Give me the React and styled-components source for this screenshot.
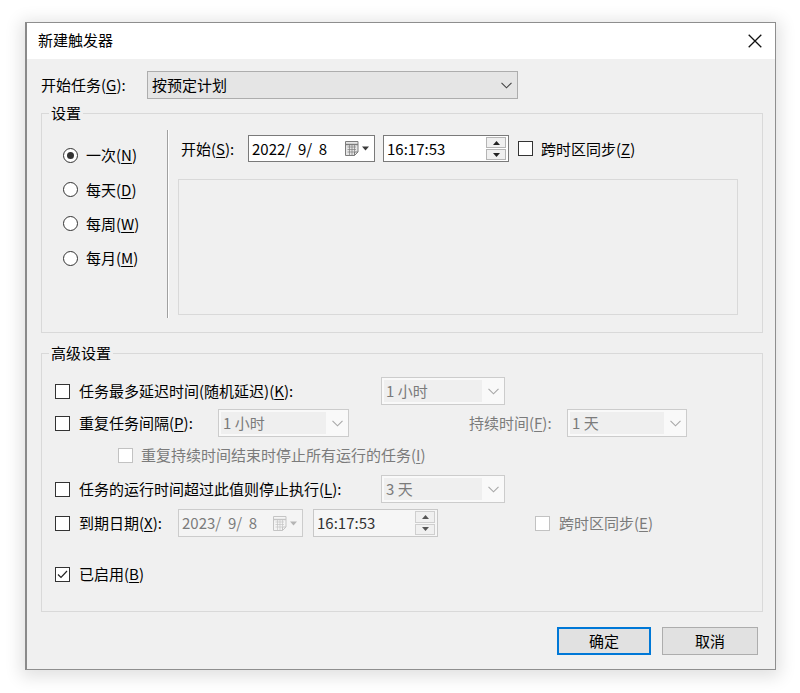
import React from "react";
import styled, { createGlobalStyle, css } from "styled-components";

const FONT = `"Noto Sans CJK SC", "Microsoft YaHei", "Noto Sans", sans-serif`;
const DISABLED = "#7b7b7b";

const GlobalStyle = createGlobalStyle`
  html, body { margin: 0; padding: 0; background: #ffffff; }
  body { font-family: ${FONT}; font-size: 15px; color: #000; }
  *, *::before, *::after { box-sizing: border-box; }
  u { text-underline-offset: 2px; text-decoration-thickness: 1px; }
`;

const Page = styled.div`
  padding: 22px 0 0 25px;
  width: 800px;
  height: 693px;
`;

const Window = styled.div`
  width: 751px;
  height: 648px;
  display: flex;
  flex-direction: column;
  background: #f0f0f0;
  border: 1px solid #8e8e8e;
  border-left: 2px solid #8a8a8a;
  box-shadow: 0 3px 16px 4px rgba(0, 0, 0, 0.12);
`;

const TitleBar = styled.div`
  height: 36px;
  flex: 0 0 36px;
  background: #ffffff;
  display: flex;
  align-items: center;
  justify-content: space-between;
  padding: 0 13px 2px 11px;
`;

const Title = styled.div`
  font-size: 15px;
  line-height: 20px;
  color: #000;
`;

const CloseButton = styled.div`
  width: 14px;
  height: 14px;
  display: flex;
  margin-top: 1px;
`;

const Body = styled.div`
  flex: 1;
  display: flex;
  flex-direction: column;
  padding: 0 12px 0 14px;
`;

const Row = styled.div`
  display: flex;
  align-items: center;
  height: ${(p) => p.$h || 28}px;
  margin-top: ${(p) => p.$mt || 0}px;
`;

const Label = styled.span`
  flex: 0 0 auto;
  width: ${(p) => (p.$w ? `${p.$w}px` : "auto")};
  margin-left: ${(p) => p.$ml || 0}px;
  font-size: 15px;
  line-height: 20px;
  white-space: nowrap;
  color: ${(p) => (p.$disabled ? DISABLED : "#000")};
`;

const Combo = styled.div`
  flex: 0 0 auto;
  width: ${(p) => p.$w}px;
  height: 28px;
  margin-left: ${(p) => p.$ml || 0}px;
  display: flex;
  align-items: center;
  border: 1px solid;
  ${(p) =>
    p.$disabled
      ? css`
          background: #f9f9f9;
          border-color: #cccccc;
          color: ${DISABLED};
        `
      : css`
          background: #e5e5e5;
          border-color: #adadad;
          color: #000;
        `}
`;

const ComboValue = styled.span`
  flex: 1;
  align-self: stretch;
  margin: 2px 0 2px 2px;
  padding-left: 2px;
  font-size: 15px;
  line-height: 22px;
  white-space: pre;
  background: ${(p) => (p.$disabled ? "#efefef" : "transparent")};
`;

const ComboArrow = styled.span`
  flex: 0 0 auto;
  width: 22px;
  display: flex;
  justify-content: center;
`;

const Chevron = ({ disabled }) => (
  <svg width="11" height="7" viewBox="0 0 11 7">
    <path
      d="M0.5 0.8 L5.5 5.8 L10.5 0.8"
      fill="none"
      stroke={disabled ? "#a8a8a8" : "#444"}
      strokeWidth="1.1"
    />
  </svg>
);

const Select = ({ w, ml, disabled, value }) => (
  <Combo $w={w} $ml={ml} $disabled={disabled}>
    <ComboValue $disabled={disabled}>{value}</ComboValue>
    <ComboArrow>
      <Chevron disabled={disabled} />
    </ComboArrow>
  </Combo>
);

// tone: "normal" | "muted" (dimmed frame, dark text) | "disabled"
const Field = styled.div`
  flex: 0 0 auto;
  width: ${(p) => p.$w}px;
  height: ${(p) => p.$h || 28}px;
  margin-left: ${(p) => p.$ml || 0}px;
  display: flex;
  align-items: center;
  padding: 0 2px 0 3px;
  border: 1px solid;
  ${(p) =>
    p.$tone === "disabled"
      ? css`
          background: #f4f4f4;
          border-color: #cccccc;
          color: ${DISABLED};
        `
      : p.$tone === "muted"
      ? css`
          background: #f6f6f6;
          border-color: #c8c8c8;
          color: #333;
        `
      : css`
          background: #ffffff;
          border-color: #7a7a7a;
          color: #000;
        `}
`;

const FieldText = styled.span`
  flex: 1;
  font-size: 15px;
  line-height: 20px;
  white-space: pre;
`;

const CalendarGlyph = ({ disabled }) => {
  const c = disabled ? "#c4c4c4" : "#7c7c7c";
  const tri = disabled ? "#b4b4b4" : "#3a3a3a";
  return (
    <svg width="28" height="17" viewBox="0 0 28 17">
      <path d="M1.5 1.5 H14 V12 L10.5 15.5 H1.5 Z" fill={disabled ? "#f4f4f4" : "#e6e6e6"} stroke={c} />
      <path d="M1.5 4.5 H14" stroke={c} strokeWidth="1.4" />
      <path d="M3.5 7 H12 M3.5 9.5 H12 M3.5 12 H10 M5.5 5 V15 M8 5 V15 M10.5 5 V13" stroke={c} strokeWidth="0.7" />
      <path d="M10.5 15.5 V12 H14" fill="none" stroke={c} />
      <path d="M18 6.5 H25 L21.5 10.5 Z" fill={tri} />
    </svg>
  );
};

const Spin = styled.div`
  flex: 0 0 auto;
  width: 20px;
  align-self: stretch;
  margin: 1px 0;
  display: flex;
  flex-direction: column;
`;

const SpinButton = styled.div`
  flex: 1;
  display: flex;
  align-items: center;
  justify-content: center;
  background: #f0f0f0;
  border: 1px solid ${(p) => (p.$muted ? "#cfcfcf" : "#b5b5b5")};
  & + & { margin-top: 1px; }
`;

const SpinArrow = ({ up, muted }) => (
  <svg width="7" height="4" viewBox="0 0 7 4">
    <path d={up ? "M0 4 H7 L3.5 0 Z" : "M0 0 H7 L3.5 4 Z"} fill={muted ? "#555" : "#222"} />
  </svg>
);

const DatePicker = ({ w, ml, value, tone, h }) => (
  <Field $w={w} $ml={ml} $h={h} $tone={tone}>
    <FieldText>{value}</FieldText>
    <CalendarGlyph disabled={tone === "disabled"} />
  </Field>
);

const TimePicker = ({ w, ml, value, tone, h }) => {
  const muted = tone === "muted";
  return (
    <Field $w={w} $ml={ml} $h={h} $tone={tone}>
      <FieldText>{value}</FieldText>
      <Spin>
        <SpinButton $muted={muted}>
          <SpinArrow up muted={muted} />
        </SpinButton>
        <SpinButton $muted={muted}>
          <SpinArrow muted={muted} />
        </SpinButton>
      </Spin>
    </Field>
  );
};

const Box = styled.span`
  flex: 0 0 auto;
  width: 15px;
  height: 15px;
  margin-left: ${(p) => p.$ml || 0}px;
  margin-right: ${(p) => p.$mr ?? 9}px;
  display: flex;
  align-items: center;
  justify-content: center;
  background: #ffffff;
  border: 1px solid ${(p) => (p.$disabled ? "#c2c2c2" : "#333333")};
`;

const CheckBox = ({ checked, disabled, ml, mr }) => (
  <Box $disabled={disabled} $ml={ml} $mr={mr}>
    {checked && (
      <svg width="11" height="9" viewBox="0 0 11 9">
        <path d="M1 4.5 L4 7.5 L10 1" fill="none" stroke="#222" strokeWidth="1.2" />
      </svg>
    )}
  </Box>
);

const Radio = styled.span`
  flex: 0 0 auto;
  width: 15px;
  height: 15px;
  margin-right: 8px;
  border-radius: 50%;
  border: 1px solid #333;
  background: #fff;
  display: flex;
  align-items: center;
  justify-content: center;
  &::after {
    content: "";
    width: 7px;
    height: 7px;
    border-radius: 50%;
    background: ${(p) => (p.$on ? "#333" : "transparent")};
  }
`;

const Group = styled.fieldset`
  margin: ${(p) => p.$mt || 0}px 0 0 0;
  padding: 0;
  min-width: 0;
  border: 1px solid #d9d9d9;
`;

const Legend = styled.legend`
  margin-left: 7px;
  padding: 0 2px;
  font-size: 15px;
  line-height: 20px;
`;

const SettingsBody = styled.div`
  display: flex;
  padding: 7px 0 14px 0;
`;

const FrequencyList = styled.div`
  flex: 0 0 125px;
  display: flex;
  flex-direction: column;
  padding: 8px 0 0 21px;
`;

const FrequencyItem = styled.label`
  display: flex;
  align-items: center;
  height: 34.4px;
  font-size: 15px;
  line-height: 20px;
`;

const Divider = styled.div`
  flex: 0 0 2px;
  height: 188px;
  border-left: 1px solid #a0a0a0;
  border-right: 1px solid #ffffff;
`;

const ScheduleColumn = styled.div`
  flex: 1;
  display: flex;
  flex-direction: column;
  padding-left: 12px;
`;

const DetailPanel = styled.div`
  width: 560px;
  height: 136px;
  margin: 17px 0 0 -3px;
  border: 1px solid #d9d9d9;
  background: #f0f0f0;
`;

const AdvancedBody = styled.div`
  display: flex;
  flex-direction: column;
  padding: 14px 0 23px 13px;
`;

const ButtonRow = styled.div`
  display: flex;
  justify-content: flex-end;
  gap: 11px;
  margin-top: 15px;
  padding-right: 5px;
`;

const DialogButton = styled.button`
  width: ${(p) => (p.$primary ? 94 : 96)}px;
  height: 28px;
  padding: 0;
  font-family: ${FONT};
  font-size: 15px;
  line-height: 20px;
  color: #000;
  background: #e1e1e1;
  border: ${(p) => (p.$primary ? "2px solid #0078d7" : "1px solid #adadad")};
`;

const Acc = ({ children }) => <u>{children}</u>;

const frequencies = [
  { text: "一次", key: "N", on: true },
  { text: "每天", key: "D" },
  { text: "每周", key: "W" },
  { text: "每月", key: "M" },
];

export default function App() {
  return (
    <>
      <GlobalStyle />
      <Page>
        <Window>
          <TitleBar>
            <Title>新建触发器</Title>
            <CloseButton>
              <svg width="14" height="14" viewBox="0 0 14 14">
                <path d="M0.7 0.7 L13.3 13.3 M13.3 0.7 L0.7 13.3" stroke="#111" strokeWidth="1.3" />
              </svg>
            </CloseButton>
          </TitleBar>

          <Body>
            <Row $mt={12}>
              <Label $w={106}>
                开始任务(<Acc>G</Acc>):
              </Label>
              <Select w={371} value="按预定计划" />
            </Row>

            <Group $mt={4}>
              <Legend>设置</Legend>
              <SettingsBody>
                <FrequencyList>
                  {frequencies.map((f) => (
                    <FrequencyItem key={f.key}>
                      <Radio $on={f.on} />
                      {f.text}(<Acc>{f.key}</Acc>)
                    </FrequencyItem>
                  ))}
                </FrequencyList>
                <Divider />
                <ScheduleColumn>
                  <Row $h={27} $mt={5}>
                    <Label $w={67}>
                      开始(<Acc>S</Acc>):
                    </Label>
                    <DatePicker w={127} h={27} value="2022/  9/  8" />
                    <TimePicker w={126} h={27} ml={8} value="16:17:53" />
                    <CheckBox ml={9} mr={8} />
                    <Label>
                      跨时区同步(<Acc>Z</Acc>)
                    </Label>
                  </Row>
                  <DetailPanel />
                </ScheduleColumn>
              </SettingsBody>
            </Group>

            <Group $mt={10}>
              <Legend>高级设置</Legend>
              <AdvancedBody>
                <Row>
                  <CheckBox />
                  <Label $w={302}>
                    任务最多延迟时间(随机延迟)(<Acc>K</Acc>):
                  </Label>
                  <Select w={124} disabled value="1 小时" />
                </Row>
                <Row $mt={4}>
                  <CheckBox />
                  <Label $w={139}>
                    重复任务间隔(<Acc>P</Acc>):
                  </Label>
                  <Select w={131} disabled value="1 小时" />
                  <Label $w={98} $ml={120} $disabled>
                    持续时间(<Acc>F</Acc>):
                  </Label>
                  <Select w={120} disabled value="1 天" />
                </Row>
                <Row $mt={4}>
                  <CheckBox ml={63} mr={8} disabled />
                  <Label $disabled>
                    重复持续时间结束时停止所有运行的任务(<Acc>I</Acc>)
                  </Label>
                </Row>
                <Row $mt={6}>
                  <CheckBox />
                  <Label $w={302}>
                    任务的运行时间超过此值则停止执行(<Acc>L</Acc>):
                  </Label>
                  <Select w={124} disabled value="3 天" />
                </Row>
                <Row $mt={6}>
                  <CheckBox />
                  <Label $w={99}>
                    到期日期(<Acc>X</Acc>):
                  </Label>
                  <DatePicker w={125} tone="disabled" value="2023/  9/  8" />
                  <TimePicker w={125} ml={10} tone="muted" value="16:17:53" />
                  <CheckBox ml={97} mr={9} disabled />
                  <Label $disabled>
                    跨时区同步(<Acc>E</Acc>)
                  </Label>
                </Row>
                <Row $mt={23}>
                  <CheckBox checked />
                  <Label>
                    已启用(<Acc>B</Acc>)
                  </Label>
                </Row>
              </AdvancedBody>
            </Group>

            <ButtonRow>
              <DialogButton $primary>确定</DialogButton>
              <DialogButton>取消</DialogButton>
            </ButtonRow>
          </Body>
        </Window>
      </Page>
    </>
  );
}
